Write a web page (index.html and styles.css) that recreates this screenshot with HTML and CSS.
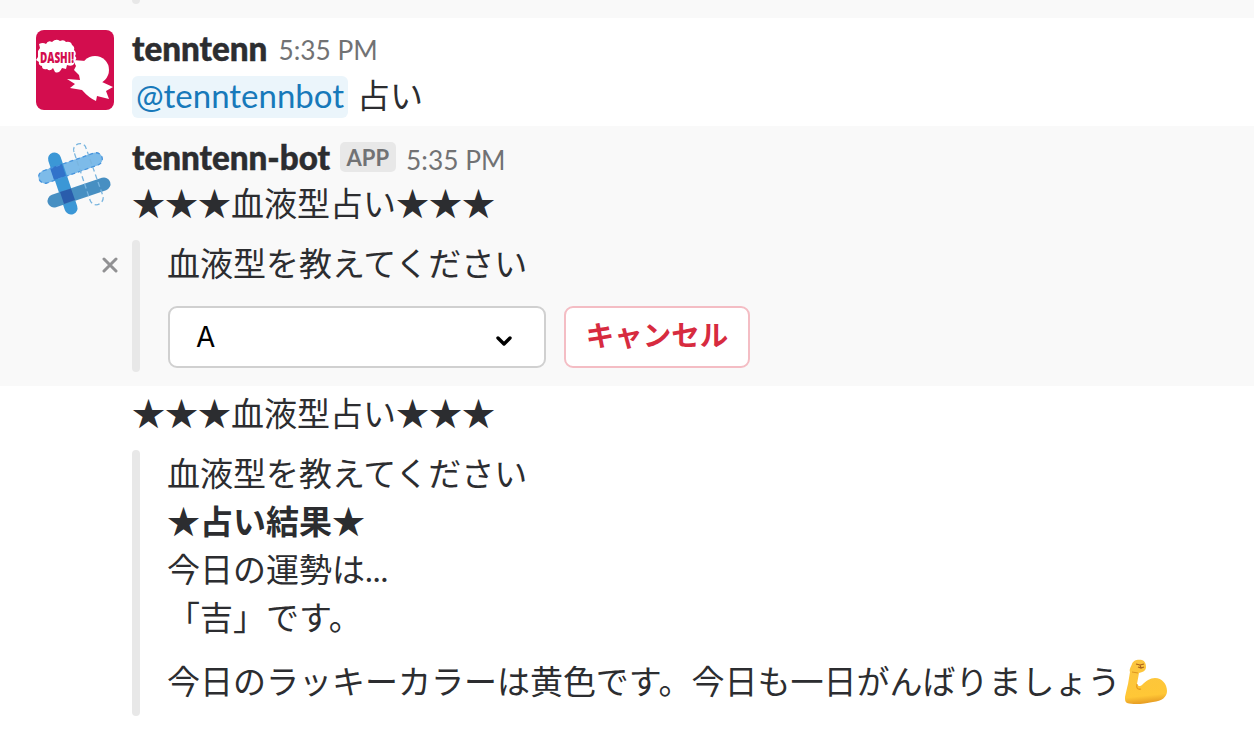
FILE: index.html
```html
<!DOCTYPE html>
<html lang="ja">
<head>
<meta charset="utf-8">
<title>tenntenn-bot</title>
<link rel="stylesheet" href="styles.css">
</head>
<body>
<main class="messages">
  <div class="previous"><span class="bar"></span></div>
  <article class="message first">
    <div class="gutter">
      <svg class="avatar" width="78" height="80" viewBox="0 0 78 80">
        <rect width="78" height="80" rx="8" fill="#d30d4e"/>
        <path fill="#fff" d="M2 21 4 18 3 14Q7 12 10 14 12 10 16 12 20 8 24 11 28 9 30 12 35 11 36 15 39 17 38 20 41 23 39 26 42 29 38 31L38 34Q36 37 31 35L30 39 26 38Q23 44 19 42L17 38Q14 42 11 39 6 40 6 36 2 35 3 32L0 30 2 27Z"/>
        <circle cx="59" cy="40" r="14" fill="#fff"/>
        <path fill="#fff" d="M37 30 50 31 68 49 66 52 77 57 70 61 73 69 61 66 60 71Q53 68 46 60L34 58 39 54 31 49 44 50 43 45 38 40 40 36Z"/>
        <text x="4" y="33" class="shout" textLength="34" lengthAdjust="spacingAndGlyphs">DASHI!</text>
      </svg>
    </div>
    <div class="content">
      <header class="meta"><b class="name">tenntenn</b><time class="time">5:35 PM</time></header>
      <p class="line mention-line"><a class="mention">@tenntennbot</a><span class="query">占い</span></p>
    </div>
  </article>
  <article class="message bot">
    <div class="gutter">
      <svg class="bot-avatar" width="90" height="90" viewBox="0 0 90 90" fill="none" stroke-linecap="round">
        <path d="M15 42 66 24" stroke="#7dbbe9" stroke-width="13"/>
        <path d="M24.500 24 41 73" stroke="#3b97d6" stroke-width="13"/>
        <path d="M24 66 74 49" stroke="#478fc2" stroke-width="13"/>
        <path d="M20 33 32 29 36 41 24 45Z" fill="#3272ca"/>
        <path d="M30 57 41 53.500 45 65 34 69Z" fill="#2a5dac"/>
        <path d="M13 36 64 18C72 16 76 27 68 30L17 48C9 50 5 39 13 36Z" stroke="#4794dc" stroke-width="1.300" stroke-dasharray="4 3" stroke-linecap="butt"/>
        <path d="M44 17C41 9 54 5 56 13L73 61C75 69 63 74 60 65Z" stroke="#79b5df" stroke-width="1.300" stroke-dasharray="5 3" stroke-linecap="butt"/>
      </svg>
    </div>
    <div class="content">
      <header class="meta"><b class="name">tenntenn-bot</b><span class="badge">APP</span><time class="time">5:35 PM</time></header>
      <p class="line title">★★★血液型占い★★★</p>
      <section class="attachment">
        <svg class="close" width="16" height="16" viewBox="0 0 16 16"><path d="M2 2 14 14M14 2 2 14"/></svg>
        <span class="bar"></span>
        <div class="body">
          <p class="line">血液型を教えてください</p>
          <div class="actions">
            <div class="select"><span>A</span><svg width="18" height="12" viewBox="0 0 18 12"><path d="M3 3 9 9 15 3"/></svg></div>
            <button class="cancel">キャンセル</button>
          </div>
        </div>
      </section>
    </div>
  </article>
  <article class="message result">
    <div class="gutter"></div>
    <div class="content">
      <p class="line title">★★★血液型占い★★★</p>
      <section class="attachment">
        <span class="bar"></span>
        <div class="body">
          <p class="line">血液型を教えてください</p>
          <p class="line strong">★占い結果★</p>
          <p class="line">今日の運勢は...</p>
          <p class="line">「吉」です。</p>
          <p class="line lucky">今日のラッキーカラーは黄色です。今日も一日がんばりましょう<svg class="emoji" width="44" height="46" viewBox="0 0 44 46">
            <defs><linearGradient id="skin" x1="0" y1="0" x2="0.100" y2="1"><stop offset="0" stop-color="#fbc540"/><stop offset=".85" stop-color="#ffc736"/><stop offset="1" stop-color="#e9a126"/></linearGradient></defs>
            <path fill="url(#skin)" d="M8 5C9 1 14 0 18 1 21 2 22 5 22 8 22 11 20 13 15 14L13 25C14 27 16 28 18 26 22 22 26 19 31 19 38 19 43 25 43 32 43 38 38 42 29 43 20 45 10 46 3 44 1 43 1 41 1 38 2 33 3 29 4 25L6 13C5 10 7 8 8 5Z"/>
            <path d="M13 25C12 29 14 31 17 30" fill="none" stroke="#e99a19" stroke-width="1.300"/>
            <path d="M12 5 16 6 20 5M14 8 17 9 20 8M16 6 17 9" fill="none" stroke="#ad641c" stroke-width="1.200"/>
            <path d="M8 13 14 14" fill="none" stroke="#dd961f"/>
          </svg></p>
        </div>
      </section>
    </div>
  </article>
</main>
</body>
</html>
```

FILE: styles.css
```css
* { box-sizing: border-box; }
body { margin: 0; background: #fff; color: #2c2d30; font-family: Lato, "Noto Sans CJK JP", sans-serif; }
p { margin: 0; }
.messages { height: 738px; overflow: hidden; }
.previous { display: flex; height: 18px; padding-left: 132px; background: #f9f9f9; }
.previous .bar { height: 4px; border-radius: 0 0 4px 4px; }
.bar { width: 8px; flex: none; border-radius: 4px; background: #e8e8e8; }
.message { display: flex; }
.gutter { width: 132px; flex: none; }
.content { flex: 1; min-width: 0; }
.first { height: 108px; }
.avatar { display: block; margin: 12px 0 0 36px; }
.shout { font: 800 15px "Open Sans", sans-serif; fill: #d30d4e; }
.bot-avatar { display: block; margin: 9px 0 0 30px; }
.meta { display: flex; height: 32px; margin-top: 14px; line-height: 32px; white-space: nowrap; }
.name { font-weight: 900; font-size: 33.2px; -webkit-text-stroke: .5px #2c2d30; }
.time { margin-left: 11px; padding-top: 2px; font-size: 26.3px; color: #717274; }
.line { height: 48px; font-size: 33px; line-height: 48px; white-space: nowrap; }
.mention-line { display: flex; align-items: center; gap: 9px; margin-top: 9px; }
.mention { height: 42px; padding: 0 4px; border-radius: 6px; background: #ebf5fb; color: #1779ba; line-height: 38px; }
.query { margin-top: -4px; }
.bot { height: 260px; background: #f9f9f9; }
.bot .meta { margin-top: 15px; }
.bot .time { padding-top: 3px; }
.badge { height: 30px; margin: 1px 0 0 10px; padding: 0 6.5px; border-radius: 5px; background: #e8e8e8; color: #717274; font-size: 22px; font-weight: 700; line-height: 31px; }
.badge + .time { margin-left: 10.5px; }
.bot .title { margin-top: 6px; }
.attachment { display: flex; position: relative; margin-top: 13px; }
.close { position: absolute; left: -30px; top: 17px; fill: none; stroke: #919193; stroke-width: 3; stroke-linecap: round; }
.body { margin: -1px 0 0 27px; }
.body > .line { letter-spacing: -.01px; }
.bot .attachment { height: 132px; }
.actions { display: flex; gap: 18px; margin: 19px 0 0 1px; }
.select { display: flex; justify-content: space-between; align-items: center; width: 378px; height: 62px; padding: 0 31px 0 26px; border: 2px solid #d0d0d0; border-radius: 9px; background: #fff; color: #000; font: 28px Inter, sans-serif; }
.select span { margin-top: -1px; }
.select svg { margin-top: 7px; fill: none; stroke: #000; stroke-width: 3.4; stroke-linecap: round; stroke-linejoin: round; }
.cancel { width: 186px; height: 62px; padding: 0 0 8px; border: 2px solid #f4bdc4; border-radius: 9px; background: #fff; color: #d72b3f; font: 700 28.5px Lato, "Noto Sans CJK JP", sans-serif; }
.result .title { margin-top: 3px; }
.result .attachment { height: 266px; }
.strong { font-weight: 700; }
.lucky { display: flex; margin-top: 16px; }
.emoji { margin: 2px 0 0 4px; }
```
